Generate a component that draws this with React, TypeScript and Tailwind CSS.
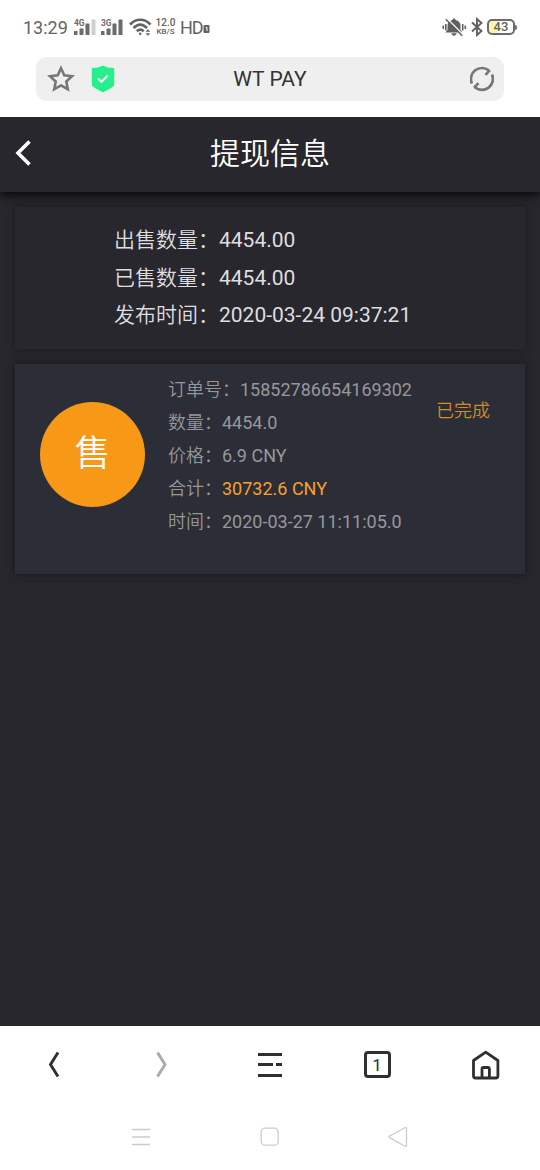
import React from "react";

const summary = [
  { label: "出售数量：", value: "4454.00" },
  { label: "已售数量：", value: "4454.00" },
  { label: "发布时间：", value: "2020-03-24 09:37:21" },
];

const order = [
  { label: "订单号：", value: "15852786654169302" },
  { label: "数量：", value: "4454.0" },
  { label: "价格：", value: "6.9 CNY" },
  { label: "合计：", value: "30732.6 CNY", highlight: true },
  { label: "时间：", value: "2020-03-27 11:11:05.0" },
];

const Signal = ({ name, weak }: { name: string; weak?: boolean }) => (
  <svg width="24" height="18" viewBox="0 0 24 18" fill="#6b6b6b">
    <text x="1" y="7" fontSize="8.5" fontWeight="700" textLength="10.5" lengthAdjust="spacingAndGlyphs">
      {name}
    </text>
    <rect x="1" y="12" width="3.5" height="4" rx="0.5" />
    <rect x="6.5" y="9.5" width="4" height="6.5" rx="0.5" />
    <rect x="12.5" y="4.5" width="4" height="11.5" rx="0.5" />
    <rect x="18.5" y="0.5" width="4" height="15.5" rx="0.5" fill={weak ? "#cfcfcf" : "#6b6b6b"} />
  </svg>
);

const StatusBar = () => (
  <div className="h-[57px] flex items-start pt-[14px] pl-[23px] pr-[23px] text-[#636363]">
    <span className="w-[50px] text-[18px] leading-[27px]">13:29</span>
    <div className="flex pt-[5px]">
      <Signal name="4G" weak />
      <span className="w-[3px]" />
      <Signal name="3G" />
    </div>
    <svg className="ml-[5px] mt-[4px]" width="24" height="20" viewBox="0 0 24 20" fill="none" stroke="#636363" strokeWidth="2.6">
      <path d="M1 6.5C7 .2 15.5 .2 21.5 6.5" />
      <path d="M4.5 10C9 5.5 13.5 5.5 18 10" />
      <path d="M7.8 13.2C10 11.2 12.5 11.2 14.7 13.2" />
      <circle cx="11.2" cy="15.8" r="1.3" fill="#636363" stroke="none" />
      <path d="M16.5 13.8l2.4-2.6 2.4 2.6zM16.5 15.2l2.4 2.6 2.4-2.6z" fill="#636363" stroke="none" />
    </svg>
    <div className="w-[23px] ml-[1px] pt-[4px] text-center whitespace-nowrap font-medium">
      <div className="text-[10px] leading-[10px]">12.0</div>
      <div className="text-[8px] leading-[8px]">KB/S</div>
    </div>
    <span className="ml-[3px] text-[18px] leading-[27px] tracking-[-1px]">HD</span>
    <svg className="mt-[10px]" width="7" height="9" viewBox="0 0 7 9">
      <rect x="0.5" y="1" width="6" height="8" rx="1" fill="#636363" />
      <path d="M2.7 3.5h1.3v3.5" fill="none" stroke="#fff" strokeWidth="1" />
    </svg>
    <div className="grow" />
    <svg className="mt-[3px]" width="25" height="20" viewBox="0 0 25 20" fill="#606060">
      <path d="M12 1.5c1 0 1.5.6 1.5 1.4 3.3.7 5 2.8 5 5.7v4.2l2 2.7H3.5l2-2.7V8.600c0-2.9 1.7-5 5-5.7 0-.8.5-1.4 1.5-1.4zM9.3 16.2h5.4c-.3 1.6-1.4 2.5-2.7 2.5s-2.4-.9-2.7-2.5z" />
      <path d="M4.8 1.2l16.5 16.5" stroke="#fff" strokeWidth="1.3" />
      <path d="M3.8 2.2l16.5 16.5" stroke="#606060" strokeWidth="1.5" />
      <path d="M1.3 8.5v3.5M3.8 7v6.5M20.7 7v6.5M23.3 8.5v3.5" stroke="#606060" strokeWidth="1.6" />
    </svg>
    <svg className="ml-[4px] mt-[3px]" width="12" height="20" viewBox="0 0 12 20" fill="none" stroke="#606060" strokeWidth="1.9">
      <path d="M1 5.5l9.5 8.5L6 18V2l4.5 4L1 14.5" />
    </svg>
    <div className="ml-[4px] mt-[5px] flex items-center">
      <div className="w-[28px] h-[16px] rounded-[5px] border-2 border-[#6c6c6c] bg-gradient-to-r from-[#fff4b0] from-30% to-white to-50% text-[13px] leading-[12.5px] font-medium text-center">
        43
      </div>
      <div className="w-[2px] h-[5px] rounded-r-sm bg-[#6c6c6c]" />
    </div>
  </div>
);

const AddressBar = () => (
  <div className="h-[44px] mx-[36px] px-[10px] rounded-[11px] bg-[#efefef] flex items-center justify-between">
    <div className="w-[80px] pl-[1px] flex items-center gap-[16px]">
      <svg className="shrink-0" width="28" height="28" viewBox="0 0 28 28" fill="none" stroke="#777" strokeWidth="2.6">
        <path d="M14 3.2l3.3 7.1 7.7.9-5.7 5.3 1.5 7.7-6.8-3.8-6.8 3.8 1.5-7.7L3 11.2l7.7-.9z" />
      </svg>
      <svg className="shrink-0" width="24" height="28" viewBox="0 0 24 28">
        <path d="M12 .5c3.2 1.7 6.5 2.5 11.2 2.5v16.5c0 2.5-5.6 4.7-11.2 8C6.4 24.2.8 22 .8 19.5V3C5.5 3 8.8 2.2 12 .5z" fill="#26f08c" />
        <path d="M7 13.5l3.5 3.3 6.2-6.3" fill="none" stroke="#fff" strokeWidth="2" />
      </svg>
    </div>
    <h2 className="pt-[2px] text-[21px] text-[#333]">WT PAY</h2>
    <div className="w-[80px] flex justify-end">
      <svg width="24" height="26" viewBox="0 0 24 26" fill="none" stroke="#777" strokeWidth="2.7">
        <path d="M1.9 17.5A11 11 0 0 1 18.8 4.4M5.1 21.5A11 11 0 0 0 22 8.5" />
        <path d="M19.8 4.2l-4.3 4.6M4 21.8l4.5-4.7" />
      </svg>
    </div>
  </div>
);

const BrowserNav = () => (
  <div className="h-[78px] grid grid-cols-5 justify-items-center items-center text-[#2f2f31]">
    <svg width="28" height="30" viewBox="0 0 28 30" fill="none" stroke="currentColor" strokeWidth="2.9">
      <path d="M18 2.5L10.5 14.5l7.5 12" />
    </svg>
    <svg width="28" height="30" viewBox="0 0 28 30" fill="none" stroke="#aaa" strokeWidth="2.9">
      <path d="M9.5 2.5L17 14.5l-7.5 12" />
    </svg>
    <svg width="28" height="30" viewBox="0 0 28 30" fill="none" stroke="currentColor" strokeWidth="2.9">
      <path d="M2 4.5h24M2 14.5h15M20 14.5h6M2 25.5h24" />
    </svg>
    <div className="w-[27px] h-[27px] -ml-[2px] -mt-[1px] rounded-[4px] border-3 border-current text-[17px] leading-[22px] text-center">
      1
    </div>
    <svg width="28" height="30" viewBox="0 0 28 30" fill="none" stroke="currentColor" strokeWidth="2.8" strokeLinejoin="round">
      <path d="M1.5 10.5L13.7 2.2l12.2 8.3V26q0 2-2 2H3.5q-2 0-2-2z" />
      <path d="M10 28V19q0-1.5 1.5-1.5h4.4q1.5 0 1.5 1.5v9" />
    </svg>
  </div>
);

const SystemNav = () => (
  <div className="h-[66px] flex justify-center items-center gap-[108px]">
    <svg width="20" height="20" viewBox="0 0 20 20" stroke="#cbcbcb" strokeWidth="1.3">
      <path d="M0 2.5h18M0 10h18M0 17.5h18" />
    </svg>
    <svg width="20" height="20" viewBox="0 0 20 20" fill="none" stroke="#cbcbcb" strokeWidth="1.3">
      <rect x="1.2" y="1.2" width="17" height="17" rx="4" />
    </svg>
    <svg width="20" height="20" viewBox="0 0 20 20" fill="none" stroke="#cbcbcb" strokeWidth="1.3" strokeLinejoin="round">
      <path d="M1.5 9q-1 .8 0 1.6L17 19.3q1.5.6 1.5-1V1.5q0-1.6-1.5-.8z" />
    </svg>
  </div>
);

const App = () => {
  return (
    <div className="w-[540px] h-[1170px] flex flex-col overflow-hidden bg-white font-[Roboto,'Noto_Sans_CJK_SC',sans-serif]">
      <StatusBar />
      <AddressBar />

      <main className="mt-[16px] h-[909px] overflow-hidden bg-[#27272d]">
        <header className="h-[75px] grid grid-cols-[60px_1fr_60px] items-center bg-[#27272d] text-white shadow-[0_2px_10px_#000]">
          <svg className="ml-[14px] -mt-[3px]" width="20" height="28" viewBox="0 0 20 28" fill="none" stroke="currentColor" strokeWidth="3.6">
            <path d="M15.5 2.5L4 14l11.5 11.5" />
          </svg>
          <h1 className="text-[30px] leading-[75px] -mt-[2px] text-center font-[350]">提现信息</h1>
        </header>

        <section className="mx-[15px] mt-[15px] h-[142px] pt-[15px] pl-[99px] text-[21px] leading-[37.5px] text-[#dedee0] bg-[#27272d] shadow-[0_0_8px_1px_#1e1e1e]">
          {summary.map((item) => (
            <p key={item.label}>
              <span className="font-[350]">{item.label}</span>
              {item.value}
            </p>
          ))}
        </section>

        <section className="mx-[15px] mt-[15px] h-[210px] flex bg-[#2c2e37] text-[18px] text-[#97979a] shadow-[0_0_8px_1px_#1c1c1c]">
          <div className="ml-[25px] mt-[38px] w-[105px] h-[105px] rounded-full bg-[#f79817] text-white text-[36px] leading-[105px] text-center font-[350]">
            售
          </div>
          <div className="ml-[23px] mt-[9px] w-[268px] leading-[33px]">
            {order.map((item) => (
              <p key={item.label}>
                <span className="font-[350]">{item.label}</span>
                <span className={item.highlight ? "text-[#f7a02d]" : ""}>{item.value}</span>
              </p>
            ))}
          </div>
          <span className="mt-[30px] leading-[33px] text-[#d18a2c] font-[350]">已完成</span>
        </section>
      </main>

      <BrowserNav />
      <SystemNav />
    </div>
  );
};

export default App;
